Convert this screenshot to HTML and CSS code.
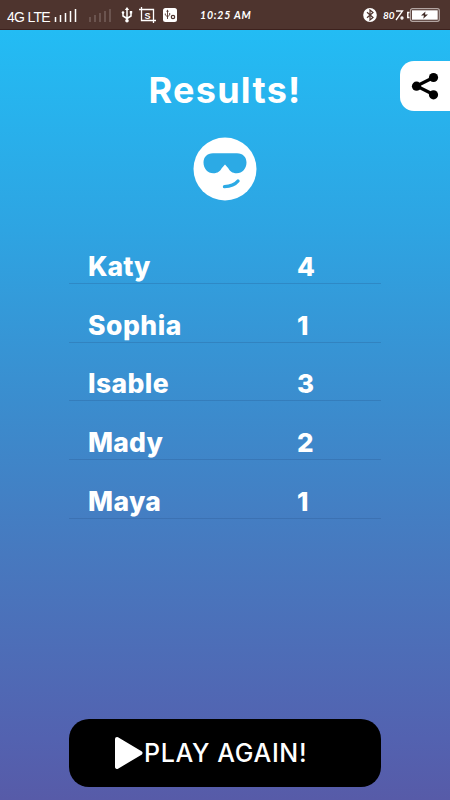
FILE: index.html
```html
<!DOCTYPE html>
<html lang="en">
<head>
<meta charset="utf-8">
<title>Results</title>
<link rel="stylesheet" href="styles.css">
</head>
<body>
<header class="status">
  <span class="network">4G LTE</span>
  <svg class="signals" width="60" height="16" viewBox="0 0 60 16">
    <path d="M1.500 10v5M6.500 8v7M11.500 6v9M16.500 4v11M21.500 2v13" stroke="#fff" stroke-width="1.500"/>
    <path d="M36 10v5M41 8v7M46 6v9M51 4v11M56 2v13" stroke="#765f5b" stroke-width="1.500"/>
  </svg>
  <svg class="usb" width="12" height="16" viewBox="0 0 12 16" fill="none" stroke="#fff" stroke-width="1.500">
    <path d="M6 2v12M2 6v3l4 2.500L10 9V5"/>
    <path d="M6 0l2.200 3H3.800z" fill="#fff" stroke="none"/>
    <circle cx="6" cy="13.700" r="1.800" fill="#fff" stroke="none"/>
    <circle cx="2" cy="5.500" r="1.300" fill="#fff" stroke="none"/>
    <path d="M8.800 4h2.400v2.500H8.800z" fill="#fff" stroke="none"/>
  </svg>
  <svg class="capture" width="17" height="16" viewBox="0 0 17 16">
    <path d="M0 2.500h14.500V16M2.500 0v13.500H17" fill="none" stroke="#fff" stroke-width="1.300"/>
    <text x="8.500" y="11.500" text-anchor="middle" class="capture-letter">S</text>
  </svg>
  <svg class="debug" width="14" height="14" viewBox="0 0 14 14">
    <rect width="14" height="14" rx="2.500" fill="#fff"/>
    <path d="M4.500 3v8M2.300 5.500V7l2.200 1.800L6.700 7V5" fill="none" stroke="#4e342e" stroke-width=".9"/>
    <path d="M4.500 1.500L5.800 3.700H3.200z" fill="#4e342e"/>
    <circle cx="10" cy="9" r="1.700" fill="none" stroke="#4e342e" stroke-width="1.200"/>
  </svg>
  <span class="clock">10:25 AM</span>
  <svg class="bluetooth" width="14" height="14" viewBox="0 0 14 14">
    <ellipse cx="7" cy="7" rx="6.800" ry="7" fill="#fff"/>
    <path d="M4 4.300l6 5.200L7 12V2l3 2.500-6 5.200" fill="none" stroke="#4e342e" stroke-width="1.200"/>
  </svg>
  <span class="charge">80<svg class="percent" width="9" height="12" viewBox="0 0 9 12" fill="none" stroke="#fff" stroke-width="1.300"><path d="M1 2h6.500L1 11"/><circle cx="7" cy="9" r="1"/></svg></span>
  <svg class="battery" width="33" height="14" viewBox="0 0 33 14">
    <rect x="3.500" y=".7" width="28.800" height="12.600" rx="2" fill="none" stroke="#b3a5a2" stroke-width="1.300"/>
    <path d="M2.500 4.500H.8v5h1.700" fill="none" stroke="#fff" stroke-width="1.500"/>
    <rect x="5" y="2.300" width="25.700" height="9.400" fill="#fff"/>
    <path d="M18.500 3.500L14 7.500h3l-.8 3.300L21 6.500h-3z" fill="#3f2a25"/>
  </svg>
</header>
<main class="screen">
  <button class="share" aria-label="Share">
    <svg width="28" height="28" viewBox="0 0 28 28">
      <path d="M22.500 5.500L5.500 14l17 8.500" fill="none" stroke="#000" stroke-width="3.200"/>
      <circle cx="22.500" cy="5.500" r="4.600"/><circle cx="5.500" cy="14.200" r="4.600"/><circle cx="22.500" cy="22.800" r="4.600"/>
    </svg>
  </button>
  <h1 class="title">Results!</h1>
  <svg class="face" width="64" height="64" viewBox="0 0 64 64">
    <circle cx="32" cy="32" r="31.500" fill="#fff"/>
    <path d="M20 16.200h24c6 0 9.500 4 9.500 9.300 0 6.200-4.300 10.700-9.700 10.700-4.800 0-7-2.300-8.500-5L32 27.500l-3.300 3.700c-1.500 2.700-3.700 5-8.500 5-5.400 0-9.700-4.500-9.700-10.700 0-5.300 3.500-9.300 9.500-9.300z" fill="#2caae5"/>
    <path d="M31.500 49.600c6-.2 10.500-2 13.500-5.600" fill="none" stroke="#2caae5" stroke-width="3.400" stroke-linecap="round"/>
  </svg>
  <ul class="scores">
    <li class="row"><span class="name katy">Katy</span><span class="score">4</span></li>
    <li class="row"><span class="name sophia">Sophia</span><span class="score">1</span></li>
    <li class="row"><span class="name isable">Isable</span><span class="score">3</span></li>
    <li class="row"><span class="name mady">Mady</span><span class="score">2</span></li>
    <li class="row"><span class="name maya">Maya</span><span class="score">1</span></li>
  </ul>
  <button class="play">
    <svg width="28" height="34" viewBox="0 0 28 34"><path d="M2 3l23.500 14L2 31z" fill="#fff" stroke="#fff" stroke-width="4" stroke-linejoin="round"/></svg>
    <span class="play-label">PLAY AGAIN!</span>
  </button>
</main>
</body>
</html>
```
FILE: styles.css
```css
* { box-sizing: border-box; }
body {
  margin: 0;
  width: 450px;
  height: 800px;
  overflow: hidden;
  display: flex;
  flex-direction: column;
  color: #fff;
  font-family: Inter, "Liberation Sans", sans-serif;
}
.status {
  height: 30px;
  flex: none;
  display: flex;
  align-items: center;
  padding: 1px 10px 0 7px;
  background: #4e342e;
  border-bottom: 1px solid #3d211d;
}
.status svg { flex: none; }
.network {
  width: 47px;
  font: 14px/16px "Liberation Sans", sans-serif;
  letter-spacing: -0.7px;
  white-space: nowrap;
  padding-top: 3px;
}
.usb { margin-left: 7px; }
.capture { margin-left: 6px; }
.capture-letter { font: bold 9px "Liberation Sans", sans-serif; fill: #fff; }
.debug { margin-left: 7px; }
.clock {
  width: 51px;
  margin-left: 23px;
  font: italic bold 10.5px/14px Lato, sans-serif;
  letter-spacing: 0.8px;
  white-space: nowrap;
}
.bluetooth { margin-left: auto; }
.charge {
  display: flex;
  align-items: center;
  width: 24px;
  margin-left: 6px;
  font: italic bold 10px/14px Lato, sans-serif;
}
.screen {
  position: relative;
  flex: 1;
  display: flex;
  flex-direction: column;
  align-items: center;
  background: linear-gradient(#23bcf4 0%, #2ea4e2 26%, #3d89cb 52%, #4779bf 68%, #5362b0 92%, #575ba8 100%);
}
.share {
  position: absolute;
  top: 31px;
  right: 0;
  width: 50px;
  height: 50px;
  padding: 0 0 0 11px;
  border: 0;
  border-radius: 14px 0 0 14px;
  background: #fff;
  display: flex;
  align-items: center;
}
.title {
  margin: 36px 0 0;
  height: 48px;
  font-size: 36px;
  font-weight: 700;
  line-height: 48px;
  letter-spacing: 1.3px;
}
.face { margin-top: 23px; }
.scores {
  list-style: none;
  width: 312px;
  margin: 24px 0 0;
  padding: 0;
}
.row {
  height: 58.75px;
  display: grid;
  grid-template-columns: 210px 1fr;
  align-items: end;
  padding: 0 0 0 19px;
  border-bottom: 1px solid rgba(35, 80, 130, 0.25);
  font-size: 26.5px;
  font-weight: 800;
  line-height: 33px;
}
.katy { letter-spacing: 0; }
.sophia { letter-spacing: 0.5px; }
.isable { letter-spacing: 0.4px; }
.mady { letter-spacing: 0.2px; }
.maya { letter-spacing: 0.4px; }
.score { font-size: 26px; margin-left: -1px; }
.play {
  width: 312px;
  height: 68px;
  margin: auto 0 13px;
  padding: 0 0 0 46px;
  display: flex;
  align-items: center;
  border: 0;
  border-radius: 20px;
  background: #000;
  color: #fff;
  font: 500 25px/32px Inter, sans-serif;
  letter-spacing: 0.65px;
}
.play-label { margin-left: 1px; white-space: nowrap; }
```
